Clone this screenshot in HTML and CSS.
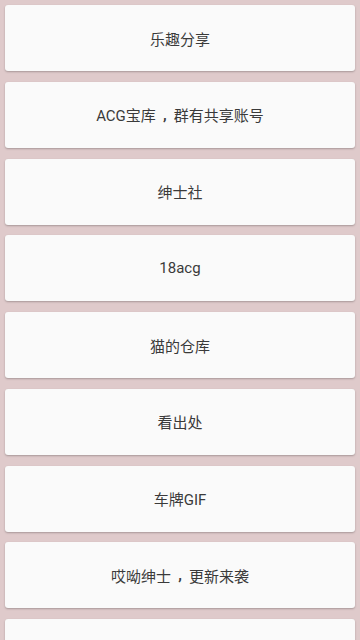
FILE: index.html
```html
<!DOCTYPE html>
<html lang="zh">
<head>
    <meta charset="UTF-8">
    <meta name="viewport" content="width=device-width, initial-scale=1.0">
    <title>分享列表</title>
    <link rel="stylesheet" href="styles.css">
</head>
<body>

<div class="list">
    <div class="item">乐趣分享</div>
    <div class="item">ACG宝库<span class="punct">,</span>群有共享账号</div>
    <div class="item">绅士社</div>
    <div class="item">18acg</div>
    <div class="item">猫的仓库</div>
    <div class="item">看出处</div>
    <div class="item">车牌GIF</div>
    <div class="item">哎呦绅士<span class="punct">,</span>更新来袭</div>
    <div class="item"></div>
</div>

</body>
</html>
```

FILE: styles.css
```css
body {
    font-family: Roboto, "Noto Sans CJK SC", sans-serif;
    margin: 0;
    background-color: #dfcacb;
    height: 640px;
    overflow: hidden;
}
.list {
    display: flex;
    flex-direction: column;
    gap: 10.75px;
    padding: 5px;
}
.item {
    flex: none;
    height: 66px;
    display: flex;
    align-items: center;
    justify-content: center;
    background-color: #fafafa;
    border-radius: 3px;
    box-shadow: 0 1px 2px rgba(0, 0, 0, 0.25);
    color: #3a3a3a;
    font-size: 15px;
}
.punct {
    display: inline-block;
    width: 1.2em;
    text-align: center;
    font-weight: bold;
}
```
